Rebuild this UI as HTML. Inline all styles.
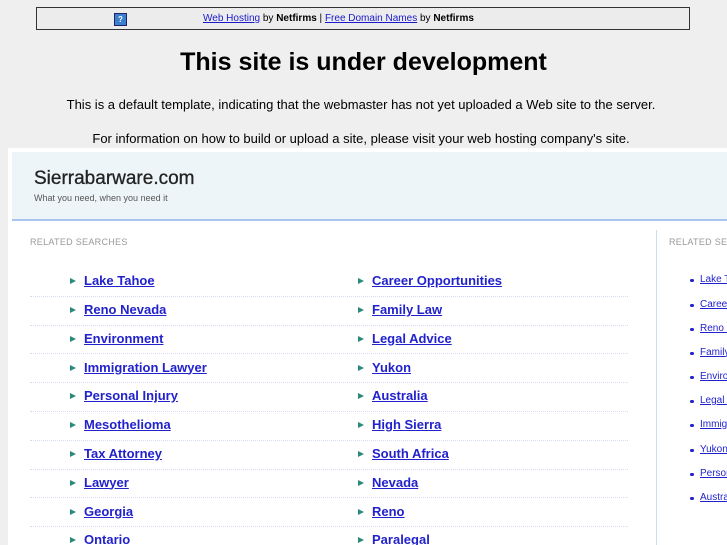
<!DOCTYPE html>
<html style="overflow:hidden"><head><style>
html,body{overflow:hidden}
body{margin:0;background:#efefef;font-family:"Liberation Sans",sans-serif;width:727px;height:545px;position:relative}
.top{position:absolute;left:36px;top:7px;width:652px;height:21px;border:1px solid #333;background:#ececec;font-size:10px;line-height:21px}
.top .t{position:absolute;left:166px;top:0;white-space:nowrap}
.top a{color:#1a1acc;text-decoration:underline}
.q{position:absolute;left:77px;top:5px;width:11px;height:11px;background:#3a7fd0;border:1px solid #226;color:#fff;font-size:8px;line-height:11px;font-weight:bold;text-align:center}
h1{position:absolute;top:48px;left:0;width:727px;text-align:center;margin:0;font-size:25px}
.p{position:absolute;left:0;width:722px;text-align:center;font-size:13px}
.panel{position:absolute;left:8px;top:148px;width:719px;height:397px;background:#fff;overflow:hidden}
.hd{position:absolute;left:4px;top:4px;width:730px;height:67px;background:#eef5f8;border-bottom:2px solid #a9c4ee}
.hd b{position:absolute;left:22px;top:16px;font-size:19px;font-weight:normal;color:#222;-webkit-text-stroke:.3px #222}
.hd span{position:absolute;left:22px;top:41px;font-size:9px;color:#555}
.lab{position:absolute;font-size:9px;color:#999;letter-spacing:.3px;white-space:nowrap}
.row{position:absolute;left:22px;width:598px;height:28.8px;border-bottom:1px dotted #d3ddef}
.it{position:absolute;top:6px;font-size:13px;font-weight:bold;color:#2222cc;text-decoration:underline;white-space:nowrap}
.it i{position:absolute;left:-14px;top:5px;width:0;height:0;border-left:6px solid #2a8a7a;border-top:3px solid transparent;border-bottom:3px solid transparent}
.vd{position:absolute;left:648px;top:82px;width:1px;height:320px;background:#cfdcf2}
.r{position:absolute;left:700px;font-size:10px;color:#2222cc;text-decoration:underline;white-space:nowrap}
.r i{position:absolute;left:-10px;top:5px;width:4px;height:3px;background:#2222cc;border-radius:2px}
.wrap{position:absolute;left:0;top:0;width:727px;height:545px;overflow:hidden}
</style></head><body>
<div class="top"><div class="q">?</div><span class="t"><a>Web Hosting</a> by <b>Netfirms</b> | <a>Free Domain Names</a> by <b>Netfirms</b></span></div>
<h1>This site is under development</h1>
<div class="p" style="top:97px">This is a default template, indicating that the webmaster has not yet uploaded a Web site to the server.</div>
<div class="p" style="top:131px">For information on how to build or upload a site, please visit your web hosting company's site.</div>
<div class="panel">
<div class="hd"><b>Sierrabarware.com</b><span>What you need, when you need it</span></div>
<div class="lab" style="left:22px;top:89px">RELATED SEARCHES</div>
<div class="lab" style="left:661px;top:89px">RELATED SEARCHES</div>
<div class="vd"></div>
</div>
<div class="wrap">
<div class="row" style="left:30px;top:267px"><span class="it" style="left:54px"><i></i>Lake Tahoe</span><span class="it" style="left:342px"><i></i>Career Opportunities</span></div>
<div class="row" style="left:30px;top:296px"><span class="it" style="left:54px"><i></i>Reno Nevada</span><span class="it" style="left:342px"><i></i>Family Law</span></div>
<div class="row" style="left:30px;top:324.5px"><span class="it" style="left:54px"><i></i>Environment</span><span class="it" style="left:342px"><i></i>Legal Advice</span></div>
<div class="row" style="left:30px;top:353.5px"><span class="it" style="left:54px"><i></i>Immigration Lawyer</span><span class="it" style="left:342px"><i></i>Yukon</span></div>
<div class="row" style="left:30px;top:382px"><span class="it" style="left:54px"><i></i>Personal Injury</span><span class="it" style="left:342px"><i></i>Australia</span></div>
<div class="row" style="left:30px;top:411px"><span class="it" style="left:54px"><i></i>Mesothelioma</span><span class="it" style="left:342px"><i></i>High Sierra</span></div>
<div class="row" style="left:30px;top:440px"><span class="it" style="left:54px"><i></i>Tax Attorney</span><span class="it" style="left:342px"><i></i>South Africa</span></div>
<div class="row" style="left:30px;top:468.5px"><span class="it" style="left:54px"><i></i>Lawyer</span><span class="it" style="left:342px"><i></i>Nevada</span></div>
<div class="row" style="left:30px;top:497.5px"><span class="it" style="left:54px"><i></i>Georgia</span><span class="it" style="left:342px"><i></i>Reno</span></div>
<div class="row" style="left:30px;top:526px;border:none"><span class="it" style="left:54px"><i></i>Ontario</span><span class="it" style="left:342px"><i></i>Paralegal</span></div>
<span class="r" style="top:274px"><i></i>Lake Tahoe</span>
<span class="r" style="top:298.5px"><i></i>Career Opportunities</span>
<span class="r" style="top:322.5px"><i></i>Reno Nevada</span>
<span class="r" style="top:346.5px"><i></i>Family Law</span>
<span class="r" style="top:371px"><i></i>Environment</span>
<span class="r" style="top:395px"><i></i>Legal Advice</span>
<span class="r" style="top:419px"><i></i>Immigration Lawyer</span>
<span class="r" style="top:443.5px"><i></i>Yukon</span>
<span class="r" style="top:467.5px"><i></i>Personal Injury</span>
<span class="r" style="top:491.5px"><i></i>Australia</span>
</div>
</body></html>
